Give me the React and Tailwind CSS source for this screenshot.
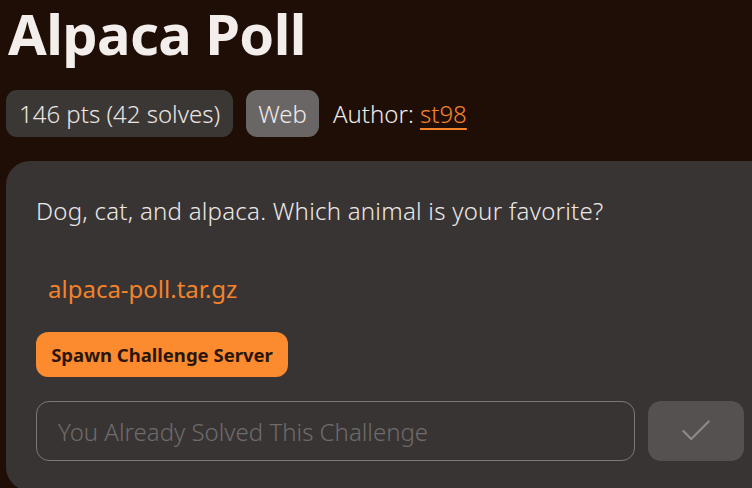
import { Check } from "lucide-react";

export default function App() {
  return (
    <div
      className="min-h-screen w-[752px] h-[488px] overflow-x-clip bg-[#1e0e05] pl-[6px] pt-[1px]"
      style={{ fontFamily: '"Noto Sans", "Open Sans", sans-serif' }}
    >
      <h1 className="ml-[2px] text-[56px] leading-[64px] font-bold tracking-[-0.6px] text-[#f3eeec]">
        Alpaca Poll
      </h1>

      <div className="mt-[25px] flex items-center">
        <span className="h-[47px] flex items-center rounded-[11px] bg-[#3b3734] px-[13px] text-[24px] font-light text-[#ebe6e4]">
          146 pts (42 solves)
        </span>
        <span className="ml-[13px] h-[47px] flex items-center rounded-[11px] bg-[#6a6665] px-[12px] text-[24px] font-light text-[#eeeae8]">
          Web
        </span>
        <span className="ml-[14px] text-[24px] font-light text-[#eeeae8]">
          Author:{" "}
          <a href="#" className="text-[#f5832c] underline underline-offset-[5px] decoration-[1.5px]">
            st98
          </a>
        </span>
      </div>

      <div className="mt-[24px] w-[768px] h-[330px] rounded-[24px] bg-[#383434] px-[30px] pt-[34px]">
        <p className="text-[24px] leading-[32px] font-light tracking-[0.25px] text-[#ece8e6]">
          Dog, cat, and alpaca. Which animal is your favorite?
        </p>

        <a href="#" className="mt-[46px] ml-[12px] block text-[24px] leading-[32px] text-[#f3822b]">
          alpaca-poll.tar.gz
        </a>

        <button className="mt-[27px] h-[45px] w-[252px] rounded-[12px] bg-[#fc8a2f] text-[18.5px] font-bold text-[#2a1608]">
          Spawn Challenge Server
        </button>

        <div className="mt-[24px] flex gap-[13px]">
          <input
            disabled
            placeholder="You Already Solved This Challenge"
            className="h-[60px] w-[599px] rounded-[13px] border border-[#7c7877] bg-transparent px-[21px] text-[24px] font-light placeholder:text-[#6f6b6a]"
          />
          <button className="h-[60px] w-[96px] flex items-center justify-center rounded-[13px] bg-[#545150]">
            <Check size={38} strokeWidth={1.4} className="text-[#8d8988]" />
          </button>
        </div>
      </div>
    </div>
  );
}
